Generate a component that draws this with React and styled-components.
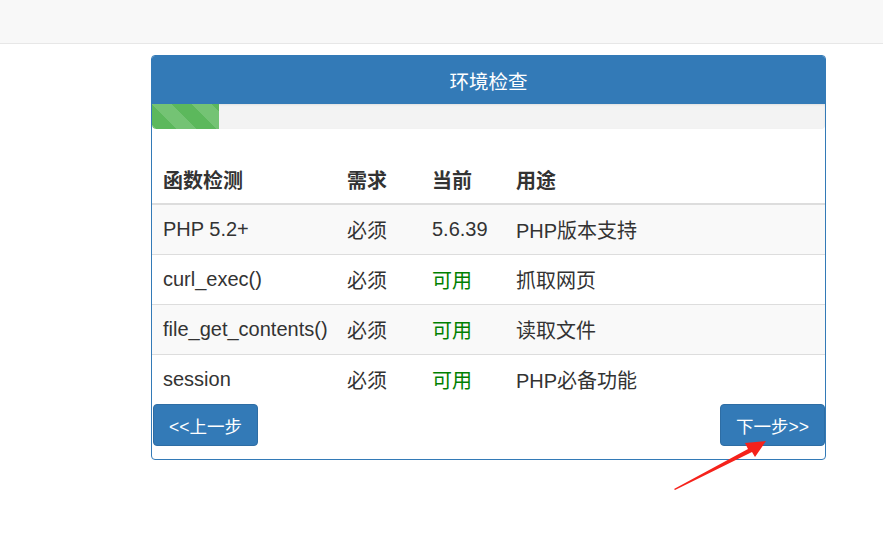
import React from "react";
import styled, { createGlobalStyle } from "styled-components";

const Global = createGlobalStyle`
  html, body { margin: 0; padding: 0; background: #fff; }
  body { font-family: "Liberation Sans", "Noto Sans CJK SC", Arial, sans-serif; color: #333; }
`;

const Page = styled.div`
  position: relative;
  width: 883px;
  height: 547px;
  overflow: hidden;
`;

const NavBar = styled.div`
  height: 43px;
  background: #f8f8f8;
  border-bottom: 1px solid #e7e7e7;
`;

const Panel = styled.div`
  margin: 11px 0 0 151px;
  width: 673px;
  border: 1px solid #337ab7;
  border-radius: 4px;
  padding-bottom: 13px;
  background: #fff;
`;

const Heading = styled.div`
  height: 48px;
  background: #337ab7;
  color: #fff;
  display: flex;
  align-items: center;
  justify-content: center;
  font-size: 19.5px;
  border-radius: 3px 3px 0 0;
`;

const Progress = styled.div`
  height: 25px;
  background: #f3f3f3;
  border-radius: 0 0 4px 4px;
  box-shadow: inset 0 1px 2px rgba(0, 0, 0, 0.08);
  overflow: hidden;
  display: flex;
`;

const Bar = styled.div`
  height: 100%;
  background-color: #5cb85c;
  background-image: linear-gradient(
    45deg,
    rgba(255, 255, 255, 0.15) 25%,
    transparent 25%,
    transparent 50%,
    rgba(255, 255, 255, 0.15) 50%,
    rgba(255, 255, 255, 0.15) 75%,
    transparent 75%,
    transparent
  );
  background-size: 40px 40px;
  border-radius: 0 0 0 4px;
`;

const Table = styled.table`
  width: 100%;
  margin-top: 26px;
  border-collapse: collapse;
  border-spacing: 0;
  table-layout: fixed;
  font-size: 20px;
`;

const Th = styled.th`
  height: 49px;
  padding: 0 6px 0 11px;
  text-align: left;
  font-weight: bold;
  border-bottom: 2px solid #ddd;
  width: ${(p) => p.$w || "auto"};
  box-sizing: border-box;
`;

const Tr = styled.tr`
  background: ${(p) => (p.$odd ? "#f9f9f9" : "#fff")};
`;

const Td = styled.td`
  height: 49px;
  padding: 0 6px 0 11px;
  vertical-align: middle;
  white-space: nowrap;
  border-top: ${(p) => (p.$first ? "none" : "1px solid #ddd")};
  color: ${(p) => (p.$ok ? "#008000" : "#333")};
`;

const Actions = styled.div`
  display: flex;
  justify-content: space-between;
  padding-left: 1px;
`;

const Btn = styled.button`
  width: 105px;
  height: 42px;
  background: #337ab7;
  border: 1px solid #2e6da4;
  border-radius: 4px;
  color: #fff;
  font-family: "Liberation Sans", "Noto Sans CJK SC", Arial, sans-serif;
  font-size: 17.5px;
  padding: 0;
  cursor: pointer;
`;

const Arrow = styled.svg`
  position: absolute;
  left: 0;
  top: 0;
  pointer-events: none;
`;

const rows = [
  ["PHP 5.2+", "必须", "5.6.39", "PHP版本支持", false],
  ["curl_exec()", "必须", "可用", "抓取网页", true],
  ["file_get_contents()", "必须", "可用", "读取文件", true],
  ["session", "必须", "可用", "PHP必备功能", true],
];

export default function App() {
  return (
    <Page>
      <Global />
      <NavBar />
      <Panel>
        <Heading>环境检查</Heading>
        <Progress>
          <Bar style={{ width: "10%" }} />
        </Progress>
        <Table>
          <thead>
            <tr>
              <Th $w="184px">函数检测</Th>
              <Th $w="85px">需求</Th>
              <Th $w="84px">当前</Th>
              <Th>用途</Th>
            </tr>
          </thead>
          <tbody>
            {rows.map((r, i) => (
              <Tr key={i} $odd={i % 2 === 0}>
                <Td $first={i === 0}>{r[0]}</Td>
                <Td $first={i === 0}>{r[1]}</Td>
                <Td $first={i === 0} $ok={r[4]}>{r[2]}</Td>
                <Td $first={i === 0}>{r[3]}</Td>
              </Tr>
            ))}
          </tbody>
        </Table>
        <Actions>
          <Btn>&lt;&lt;上一步</Btn>
          <Btn>下一步&gt;&gt;</Btn>
        </Actions>
      </Panel>
      <Arrow width="883" height="547" viewBox="0 0 883 547">
        <polygon
          points="674,489 748,449 745,443 766,441 755,457 752,452 675,490"
          fill="#f5221b"
        />
      </Arrow>
    </Page>
  );
}
